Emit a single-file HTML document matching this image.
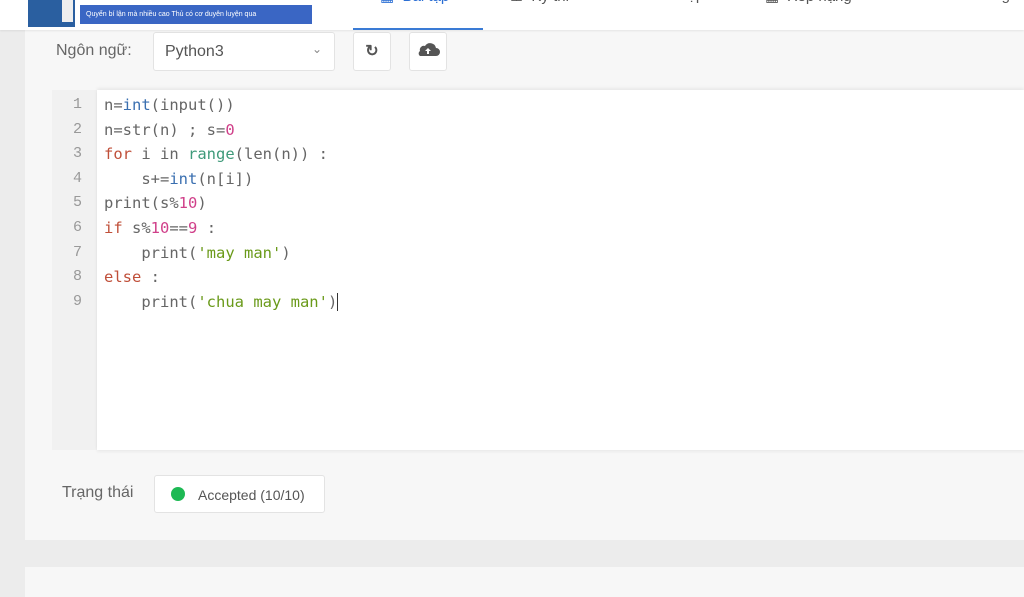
<!DOCTYPE html>
<html><head><meta charset="utf-8"><style>
body{margin:0;width:1024px;height:593px;overflow:hidden;background:#ececec;font-family:"Liberation Sans",sans-serif;position:relative}
.hdr{position:absolute;left:0;top:0;width:1024px;height:30px;background:#fff;box-shadow:0 1px 2px rgba(0,0,0,.08);z-index:2;overflow:hidden}
.nav{position:absolute;top:-13px;font-size:15px;color:#555}
.card{position:absolute;left:25px;top:30px;width:999px;height:510px;background:#f7f7f7}
.card2{position:absolute;left:25px;top:567px;width:999px;height:30px;background:#f7f7f7}
.lbl{position:absolute;font-size:16px;color:#666}
.box{position:absolute;background:#fff;border:1px solid #e3e3e3;border-radius:3px}
.gut{position:absolute;left:52px;top:90px;width:45px;height:360px;background:#f1f1f1}
.ed{position:absolute;left:97px;top:90px;width:927px;height:360px;background:#fff;box-shadow:0 -2px 3px rgba(0,0,0,.06),0 2px 3px rgba(0,0,0,.05)}
.ln{position:absolute;left:52px;top:93px;width:30px;text-align:right;font:15px/24.6px "Liberation Mono",monospace;color:#999}
.code{position:absolute;left:104px;top:93px;font:15.5px/24.6px "DejaVu Sans Mono","Liberation Mono",monospace;color:#666;white-space:pre}
.k{color:#c0503a}.b{color:#3a6fb0}.g{color:#3f9a7a}.n{color:#d0408a}.s{color:#6a9a1a}
</style></head><body>
<div class="hdr">
 <div style="position:absolute;left:28px;top:0;width:32px;height:27px;background:#2a5fa0"></div>
 <div style="position:absolute;left:60px;top:0;width:15px;height:27px;background:#2a5fa0"></div>
 <div style="position:absolute;left:62px;top:0;width:11px;height:22px;background:#eee"></div>
 <div style="position:absolute;left:80px;top:5px;width:232px;height:19px;background:#3a66c4;color:#fff;font-size:7px;line-height:19px;padding-left:6px;box-sizing:border-box">Quyển bí lận mà nhiều cao Thủ có cơ duyên luyện qua</div>
 <div class="nav" style="left:380px;color:#2c6fd4">▦ &nbsp;Bài tập</div>
 <div style="position:absolute;left:353px;top:28px;width:130px;height:2px;background:#3a7bd5"></div>
 <div class="nav" style="left:510px">⊥ &nbsp;Kỳ thi</div>
 <div class="nav" style="left:630px">▬ &nbsp;Bài nộp</div>
 <div class="nav" style="left:765px">▦ &nbsp;Xếp hạng</div>
 <div class="nav" style="left:950px">● &nbsp;Thông</div>
</div>
<div class="card"></div>
<div class="lbl" style="left:56px;top:42px">Ngôn ngữ:</div>
<div class="box" style="left:153px;top:32px;width:180px;height:37px"><span style="position:absolute;left:11px;top:10px;font-size:16px;color:#555">Python3</span><span style="position:absolute;right:12px;top:9px;font-size:12px;color:#888">⌄</span></div>
<div class="box" style="left:353px;top:32px;width:36px;height:37px;text-align:center;line-height:37px;font-size:16px;color:#555;font-weight:bold">↻</div>
<div class="box" style="left:409px;top:32px;width:36px;height:37px"><svg width="36" height="37" viewBox="0 0 36 37"><path d="M10 23h16a4 4 0 0 0 0-8 6 6 0 0 0-11-2 4 4 0 0 0-5 5 3 3 0 0 0 0 5z" fill="#555"/><path d="M18 15l-3 3h2v3h2v-3h2z" fill="#fff"/></svg></div>
<div class="gut"></div><div class="ed"></div>
<div class="ln">1<br>2<br>3<br>4<br>5<br>6<br>7<br>8<br>9</div>
<div class="code">n=<span class="b">int</span>(input())
n=str(n) ; s=<span class="n">0</span>
<span class="k">for</span> i in <span class="g">range</span>(len(n)) :
    s+=<span class="b">int</span>(n[i])
print(s%<span class="n">10</span>)
<span class="k">if</span> s%<span class="n">10</span>==<span class="n">9</span> :
    print(<span class="s">'may man'</span>)
<span class="k">else</span> :
    print(<span class="s">'chua may man'</span>)<span style="border-left:1px solid #333"></span></div>
<div class="lbl" style="left:62px;top:484px">Trạng thái</div>
<div class="box" style="left:154px;top:475px;width:169px;height:36px"><span style="position:absolute;left:16px;top:11px;width:14px;height:14px;border-radius:50%;background:#1db954"></span><span style="position:absolute;left:43px;top:11px;font-size:14px;color:#555">Accepted (10/10)</span></div>
<div class="card2"></div>
</body></html>
